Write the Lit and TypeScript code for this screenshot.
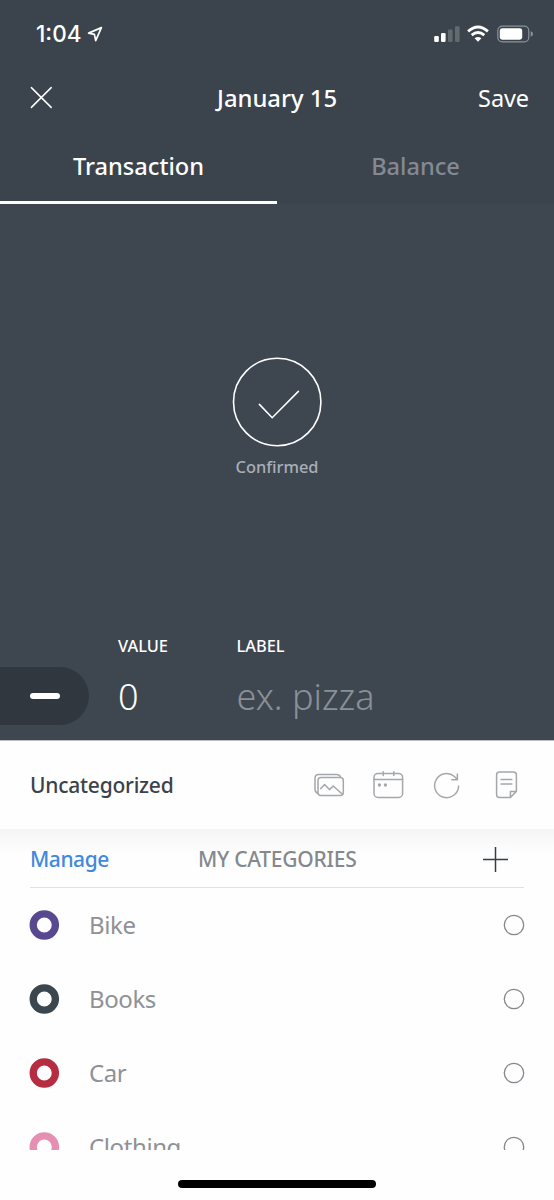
import { LitElement, html, css } from "lit";
import { customElement } from "lit/decorators.js";

interface Category {
  name: string;
  color: string;
}

const CATEGORIES: Category[] = [
  { name: "Bike", color: "#584890" },
  { name: "Books", color: "#3c464f" },
  { name: "Car", color: "#b62d41" },
  { name: "Clothing", color: "#e58fb2" },
];

@customElement("category-row")
class CategoryRow extends LitElement {
  static properties = { name: {}, color: {} };
  declare name: string;
  declare color: string;

  static styles = css`
    :host {
      display: flex;
      align-items: center;
      height: 74px;
      flex: none;
      padding: 0 29px 0 29px;
    }
    .name {
      flex: 1;
      padding-left: 30px;
      font-size: 24px;
      letter-spacing: -0.4px;
      line-height: 34px;
      color: #8e9196;
    }
    svg {
      display: block;
    }
  `;

  render() {
    return html`
      <svg width="30" height="30" viewBox="0 0 30 30" fill="none" stroke-width="7.3" stroke=${this.color}>
        <circle cx="15.3" cy="15" r="11.1" />
      </svg>
      <span class="name">${this.name}</span>
      <svg width="22" height="22" viewBox="0 0 22 22" fill="none" stroke="#85878c" stroke-width="1.3">
        <circle cx="11" cy="11" r="9.7" />
      </svg>
    `;
  }
}

@customElement("app-root")
class AppRoot extends LitElement {
  static styles = css`
    :host {
      display: flex;
      flex-direction: column;
      width: 554px;
      height: 1200px;
      overflow: hidden;
      background: #fefefe;
      font-family: "Noto Sans", "Open Sans", sans-serif;
      color: #fff;
    }
    svg {
      display: block;
      flex: none;
    }
    .top {
      background: #3b444c;
      height: 204px;
      flex: none;
    }
    .status {
      display: flex;
      align-items: center;
      height: 68px;
      padding: 0 20px 0 36px;
    }
    .time {
      font: 500 22.5px/30px Inter, sans-serif;
      width: 50px;
      white-space: nowrap;
    }
    .status-icons {
      margin-left: auto;
    }
    .nav {
      display: grid;
      grid-template-columns: 1fr auto 1fr;
      align-items: center;
      height: 59px;
      padding: 0 25px 0 30px;
    }
    .title {
      font-size: 23.8px;
      font-weight: 500;
      margin-right: 5px;
    }
    .save {
      justify-self: end;
      font-size: 23.5px;
      letter-spacing: -0.1px;
    }
    .tabs {
      display: grid;
      grid-template-columns: 1fr 1fr;
      height: 77px;
    }
    .tab {
      box-sizing: border-box;
      padding-top: 22px;
      line-height: 34px;
      text-align: center;
      font-size: 23.6px;
      font-weight: 500;
      border-bottom: 3px solid transparent;
      color: #848a94;
    }
    .tab.active {
      color: #fff;
      border-color: #fff;
    }
    .hero {
      display: flex;
      flex-direction: column;
      background: #3e4750;
      flex: none;
      border-bottom: 1px solid #bcbfc2;
      box-sizing: border-box;
      height: 537px;
    }
    .confirm {
      display: flex;
      flex-direction: column;
      align-items: center;
      padding-top: 152px;
      height: 277px;
    }
    .confirm-label {
      margin-top: 7px;
      line-height: 24px;
      font-size: 16.4px;
      font-weight: 500;
      color: #a9aeb7;
    }
    .fields {
      display: grid;
      grid-template-columns: 118px 118.5px 1fr;
      grid-template-rows: 34px 58px;
    }
    .caption {
      line-height: 26px;
      font-size: 16.4px;
      font-weight: 500;
    }
    .caption.value {
      grid-column: 2;
    }
    .pill {
      display: flex;
      align-items: center;
      width: 89px;
      height: 58px;
      box-sizing: border-box;
      padding-left: 29.5px;
      border-radius: 0 29px 29px 0;
      background: #30373f;
    }
    .minus {
      width: 30px;
      height: 6px;
      border-radius: 3px;
      background: #fff;
    }
    .big {
      font-size: 36px;
      font-weight: 350;
      line-height: 59px;
    }
    .placeholder {
      color: #8a9098;
    }
    .current {
      display: flex;
      align-items: center;
      height: 88px;
      flex: none;
      padding: 0 35px 0 30px;
      background: #fefefe;
    }
    .current-name {
      flex: 1;
      font-size: 21px;
      letter-spacing: -0.24px;
      font-weight: 500;
      color: #3b424b;
    }
    .list-head {
      display: flex;
      flex-direction: column;
      height: 59px;
      flex: none;
      background: linear-gradient(#f5f5f5, #fefefe 26px);
    }
    .list-bar {
      display: grid;
      grid-template-columns: 168px 1fr auto;
      align-items: center;
      height: 57px;
      margin: 0 30px;
      padding-right: 14px;
      padding-top: 1px;
      border-bottom: 1px solid #dfe0e1;
      font-size: 21px;
      letter-spacing: -0.26px;
      font-weight: 500;
    }
    .manage {
      color: #4189dc;
      letter-spacing: -0.45px;
    }
    .heading {
      color: #85898e;
    }
    .list {
      display: flex;
      flex-direction: column;
      height: 262px;
      flex: none;
      overflow: hidden;
    }
    .footer {
      flex: 1;
      display: flex;
      justify-content: center;
      align-items: flex-start;
      padding-top: 30px;
    }
    .home {
      width: 198px;
      height: 8px;
      border-radius: 4px;
      background: #000;
    }
  `;

  render() {
    return html`
      <div class="top">
        <div class="status">
          <span class="time">1:04</span>
          <svg width="18" height="18" viewBox="0 0 18 18" fill="none" stroke="#fff" stroke-width="1.7" stroke-linejoin="round">
            <path d="M15.4 2.6 2.6 8.1 8.4 9.4 9.7 15.6Z" />
          </svg>
          <svg class="status-icons" width="100" height="20" viewBox="0 0 100 20" fill="#fff">
            <rect x="0.2" y="12" width="4.6" height="6" rx="1.2" />
            <rect x="7" y="9" width="4.6" height="9" rx="1.2" />
            <rect x="14" y="5.5" width="4.6" height="12.5" rx="1.2" opacity="0.2" />
            <rect x="21" y="2.2" width="4.6" height="15.8" rx="1.2" opacity="0.2" />
            <path d="M44 17.8 40.6 14.3Q44 11.6 47.4 14.3Z" />
            <g fill="none" stroke="#fff" stroke-width="2.9">
              <path d="M34.1 7.4Q44-1.2 53.9 7.4" />
              <path d="M37.7 11.1Q44 5.8 50.3 11.1" />
            </g>
            <rect x="63.8" y="2.2" width="31" height="15.6" rx="4.5" fill="none" stroke="#8d9297" stroke-width="1.2" />
            <rect x="65.8" y="4.3" width="22.4" height="11.4" rx="2.4" />
            <path d="M96.7 7.3Q99 8.1 99 10T96.7 12.7Z" fill="#8d9297" />
          </svg>
        </div>
        <div class="nav">
          <svg width="23" height="23" viewBox="0 0 23 23" stroke="#fff" stroke-width="1.5" stroke-linecap="round">
            <path d="M1.4 1.6 21.2 21.4M21.2 1.6 1.4 21.4" />
          </svg>
          <span class="title">January 15</span>
          <span class="save">Save</span>
        </div>
        <div class="tabs">
          <span class="tab active">Transaction</span>
          <span class="tab">Balance</span>
        </div>
      </div>

      <div class="hero">
        <div class="confirm">
          <svg width="92" height="92" viewBox="0 0 92 92" fill="none" stroke="#fff" stroke-width="1.6" stroke-linecap="round">
            <circle cx="46.2" cy="46" r="43.7" />
            <path d="M28.4 48.4 41.2 61.7 67.4 35.4" />
          </svg>
          <span class="confirm-label">Confirmed</span>
        </div>
        <div class="fields">
          <span class="caption value">VALUE</span>
          <span class="caption">LABEL</span>
          <span class="pill"><span class="minus"></span></span>
          <span class="big">0</span>
          <span class="big placeholder">ex. pizza</span>
        </div>
      </div>

      <div class="current">
        <span class="current-name">Uncategorized</span>
        <svg width="206" height="30" viewBox="0 0 206 30" fill="none" stroke="#a5a7aa" stroke-width="1.5" stroke-linecap="round" stroke-linejoin="round">
          <path d="M4.8 23.4Q2 22.2 2 19.2V8.6Q2 4.6 5.6 4.6H23.6Q26.6 4.6 27.6 7.2" />
          <rect x="5" y="7.4" width="25.3" height="18" rx="3" />
          <path d="M7.8 18.6 11.6 14.6 16.4 19.6 20.2 16 29.4 24.2" />
          <rect x="61" y="3.4" width="28.6" height="24" rx="4" />
          <path d="M61 9.6H89.6M70.2 1.8V5.4M80.8 1.8V5.4" />
          <circle cx="66.4" cy="15" r="0.9" fill="#a5a7aa" />
          <circle cx="72.4" cy="15" r="0.9" fill="#a5a7aa" />
          <path d="M145.6 16A12 12 0 1 1 141.4 6.5L144.2 9.2M144.4 4V9.8H138.8" />
          <path d="M186.4 1.9H200.4Q203.4 1.9 203.4 4.9V21.4L197.4 27.5H186.4Q183.6 27.5 183.6 24.5V4.9Q183.6 1.9 186.4 1.9ZM197.4 27.5V21.4H203.4M188 9.5H198.8M188 14H198.8" />
        </svg>
      </div>

      <div class="list-head">
        <div class="list-bar">
          <span class="manage">Manage</span>
          <span class="heading">MY CATEGORIES</span>
          <svg width="28" height="28" viewBox="0 0 28 28" stroke="#363d45" stroke-width="1.5">
            <path d="M1 14.5H26M13.5 2V27" />
          </svg>
        </div>
      </div>

      <div class="list">
        ${CATEGORIES.map((c) => html`<category-row .name=${c.name} .color=${c.color}></category-row>`)}
      </div>
      <div class="footer"><div class="home"></div></div>
    `;
  }
}
